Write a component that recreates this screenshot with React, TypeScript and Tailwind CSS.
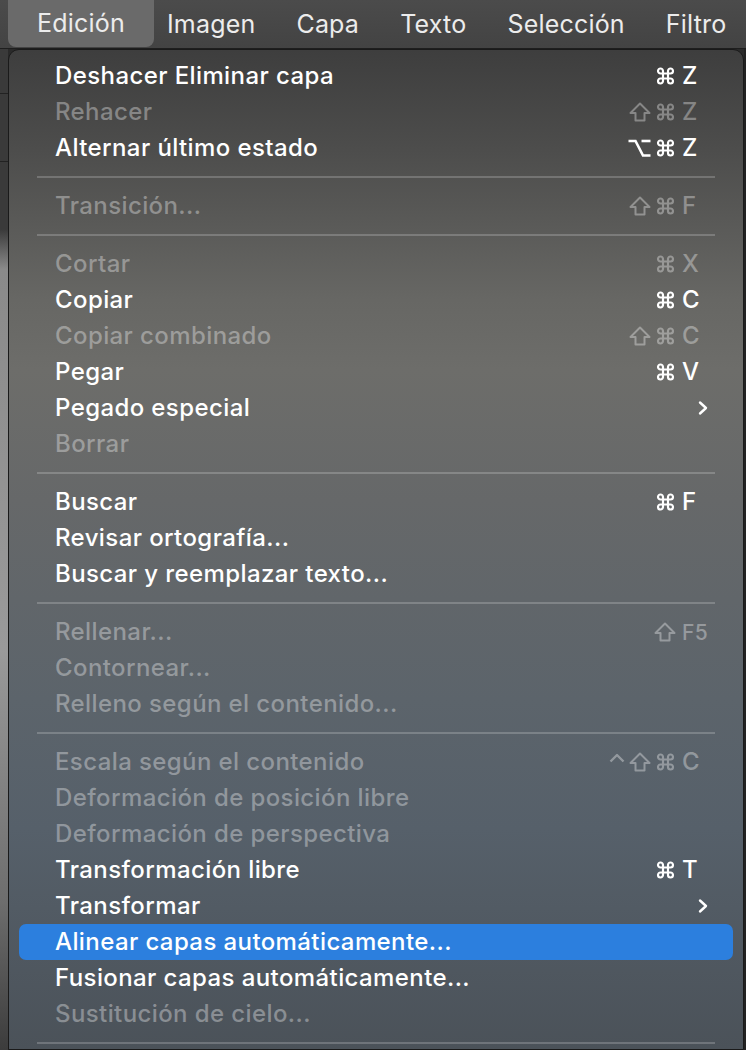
import React from "react";

type Item =
  | { sep: true }
  | {
      sep?: false;
      label: string;
      on?: boolean;
      mods?: string;
      key?: string;
      sub?: boolean;
      active?: boolean;
    };

const items: Item[] = [
  { label: "Deshacer Eliminar capa", on: true, mods: "c", key: "Z" },
  { label: "Rehacer", mods: "sc", key: "Z" },
  { label: "Alternar último estado", on: true, mods: "oc", key: "Z" },
  { sep: true },
  { label: "Transición...", mods: "sc", key: "F" },
  { sep: true },
  { label: "Cortar", mods: "c", key: "X" },
  { label: "Copiar", on: true, mods: "c", key: "C" },
  { label: "Copiar combinado", mods: "sc", key: "C" },
  { label: "Pegar", on: true, mods: "c", key: "V" },
  { label: "Pegado especial", on: true, sub: true },
  { label: "Borrar" },
  { sep: true },
  { label: "Buscar", on: true, mods: "c", key: "F" },
  { label: "Revisar ortografía...", on: true },
  { label: "Buscar y reemplazar texto...", on: true },
  { sep: true },
  { label: "Rellenar...", mods: "s", key: "F5" },
  { label: "Contornear..." },
  { label: "Relleno según el contenido..." },
  { sep: true },
  { label: "Escala según el contenido", mods: "tsc", key: "C" },
  { label: "Deformación de posición libre" },
  { label: "Deformación de perspectiva" },
  { label: "Transformación libre", on: true, mods: "c", key: "T" },
  { label: "Transformar", on: true, sub: true },
  { label: "Alinear capas automáticamente...", on: true, active: true },
  { label: "Fusionar capas automáticamente...", on: true },
  { label: "Sustitución de cielo..." },
  { sep: true },
];

const bar = ["Edición", "Imagen", "Capa", "Texto", "Selección", "Filtro"];

// modifier key glyphs
const Mod = ({ k }: { k: string }) => {
  if (k === "c")
    return (
      <svg width="21" height="20" viewBox="0 0 24 24" fill="none" stroke="currentColor" strokeWidth="2.6">
        <path d="M15 6v12a3 3 0 1 0 3-3H6a3 3 0 1 0 3 3V6a3 3 0 1 0-3 3h12a3 3 0 1 0-3-3" />
      </svg>
    );
  if (k === "s")
    return (
      <svg width="22" height="20" viewBox="0 0 22 20" fill="none" stroke="currentColor" strokeWidth="2" strokeLinejoin="round">
        <path d="M11 1.5 L20.5 11 H15.5 V18.5 H6.5 V11 H1.5 Z" />
      </svg>
    );
  if (k === "o")
    return (
      <svg width="23" height="18" viewBox="0 0 23 18" fill="none" stroke="currentColor" strokeWidth="2.6">
        <path d="M0.5 2 H7.5 L15 16.5 H22.5" />
        <path d="M13.5 2 H22.5" />
      </svg>
    );
  return (
    <svg width="16" height="20" viewBox="0 0 16 20" fill="none" stroke="currentColor" strokeWidth="2.4" strokeLinejoin="round">
      <path d="M1.5 9.5 L8 3 L14.5 9.5" />
    </svg>
  );
};

const Chevron = () => (
  <svg width="12" height="16" viewBox="0 0 12 16" fill="none">
    <path d="M3 2.5 L9 8 L3 13.5" stroke="currentColor" strokeWidth="2.4" strokeLinecap="round" strokeLinejoin="round" />
  </svg>
);

const Row = ({ item }: { item: Exclude<Item, { sep: true }> }) => {
  const color = item.on ? "text-white" : "text-white/35";
  return (
    <div
      className={`h-9 mx-[10px] flex items-center rounded-[7px] ${
        item.active ? "bg-[#2c7fde]" : ""
      } ${color}`}
    >
      <span className="pl-[36px] flex-1 whitespace-nowrap">{item.label}</span>
      {item.key && (
        <span className="flex items-center">
          <span className="flex items-center gap-[4px]">
            {item.mods!.split("").map((m, i) => (
              <Mod key={i} k={m} />
            ))}
          </span>
          <span className={`ml-[6px] w-[51px] ${item.key === "F5" ? "text-[21px]" : ""}`}>{item.key}</span>
        </span>
      )}
      {item.sub && (
        <span className="pr-[24px] flex items-center">
          <Chevron />
        </span>
      )}
    </div>
  );
};

export default function App() {
  return (
    <div className="w-[746px] h-[1050px] overflow-hidden flex flex-col bg-[#2a2a2a] font-['Inter',sans-serif] text-[24px] font-medium tracking-[0.4px] leading-none">
      {/* menu bar */}
      <div className="h-[49px] shrink-0 flex items-stretch gap-[41px] bg-[linear-gradient(180deg,#4b4b4b,#434343)] border-b border-[#1e1e1e] text-[#ececec] text-[25px] font-normal tracking-[0.2px]">
        {bar.map((t, i) =>
          i === 0 ? (
            <div key={t} className="flex items-center ml-[8px] -mr-[28px] px-[29px] bg-[#6a6a6a] rounded-b-[8px] mb-[1px]">
              {t}
            </div>
          ) : (
            <div key={t} className="flex items-center whitespace-nowrap">
              {t}
            </div>
          )
        )}
      </div>

      <div className="flex flex-1 min-h-0">
        {/* side strip */}
        <div className="w-[8px] shrink-0 flex flex-col bg-[linear-gradient(180deg,#3a3a3a_0%,#3a3a3a_18%,#8a8a8a_22%,#9a9a9a_60%,#6e6e6e_85%,#3c3c3c_100%)]">
          <div className="h-[45px] border-b border-[#222]" />
          <div className="h-[68px] border-b border-[#222]" />
        </div>

        {/* menu panel */}
        <div className="flex-1 rounded-t-[11px] border border-[#1a1a1a] bg-[linear-gradient(180deg,#3e3e3e_0%,#4d4d4c_10%,#676764_25%,#6d6d6a_32%,#666869_45%,#5c646b_65%,#56606a_78%,#4b5259_100%)] pt-[8px]">
          {items.map((it, i) =>
            it.sep ? (
              <div key={i} className="h-[22px] flex items-center px-[28px]">
                <div className="h-[2px] w-full bg-white/20" />
              </div>
            ) : (
              <Row key={i} item={it} />
            )
          )}
        </div>

        <div className="w-[2px] shrink-0 bg-[#222]" />
      </div>
    </div>
  );
}
